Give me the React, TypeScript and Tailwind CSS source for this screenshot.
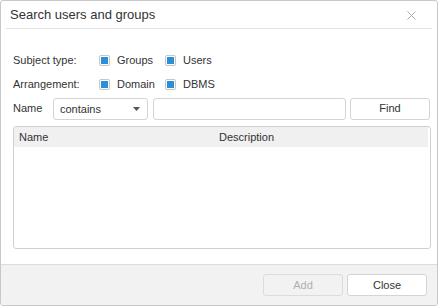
import React from "react";

function Check({ label }: { label: string }) {
  return (
    <div className="flex items-center">
      <div className="w-[11px] h-[11px] border border-[#c6c6c6] rounded-[2px] flex items-center justify-center bg-white">
        <div className="w-[7px] h-[7px] bg-[#2c8ed6]" />
      </div>
      <span className="ml-[7px]">{label}</span>
    </div>
  );
}

export default function App() {
  return (
    <div
      className="w-[440px] h-[307px] bg-white text-[11px] text-[#333]"
      style={{ fontFamily: '"Liberation Sans", Arial, sans-serif' }}
    >
      <div className="w-[438px] h-[306px] border border-[#c8c8c8] rounded-[3px] flex flex-col bg-white overflow-hidden">
        <div className="h-[27px] flex items-center justify-between pl-[9px] pr-[21px]">
          <span className="text-[13px] text-[#333]">Search users and groups</span>
          <svg width="9" height="9" viewBox="0 0 9 9" className="mt-[2px]">
            <path d="M0.5 0.5 L8.5 8.5 M8.5 0.5 L0.5 8.5" stroke="#a8a8a8" strokeWidth="1" />
          </svg>
        </div>
        <div className="mx-[5px] border-b border-[#e2e2e2]" />
        <div className="flex-1 flex flex-col pl-[12px] pr-[6px]">
          <div className="h-[24px] mt-[19px] flex items-center">
            <span className="w-[86px]">Subject type:</span>
            <div className="w-[66px]"><Check label="Groups" /></div>
            <Check label="Users" />
          </div>
          <div className="h-[24px] flex items-center">
            <span className="w-[86px]">Arrangement:</span>
            <div className="w-[66px]"><Check label="Domain" /></div>
            <Check label="DBMS" />
          </div>
          <div className="h-[23px] mt-[1px] flex items-center">
            <span className="w-[40px]">Name</span>
            <div className="w-[95px] h-[22px] border border-[#d4d4d4] rounded-[3px] flex items-center justify-between pl-[6px] pr-[7px]">
              <span className="mt-[1px]">contains</span>
              <svg width="7" height="4" viewBox="0 0 7 4">
                <path d="M0 0 L7 0 L3.5 4 Z" fill="#555" />
              </svg>
            </div>
            <div className="ml-[5px] w-[193px] h-[22px] border border-[#d4d4d4] rounded-[3px]" />
            <div className="ml-[4px] w-[80px] h-[22px] border border-[#d4d4d4] rounded-[3px] flex items-center justify-center">
              Find
            </div>
          </div>
          <div className="mt-[6px] w-[418px] h-[123px] border border-[#d0d0d0] rounded-[3px] overflow-hidden">
            <div className="h-[20px] flex items-center bg-[#f0f0f0] mr-[2px]">
              <span className="w-[205px] pl-[5px]">Name</span>
              <span>Description</span>
            </div>
          </div>
        </div>
        <div className="h-[41px] border-t border-[#dcdcdc] bg-[#f2f2f2] flex items-center justify-end pr-[10px] gap-[4px]">
          <div className="w-[80px] h-[22px] border border-[#dcdcdc] rounded-[3px] flex items-center justify-center text-[#b0b0b0] bg-[#f2f2f2]">
            Add
          </div>
          <div className="w-[80px] h-[22px] border border-[#d4d4d4] rounded-[3px] flex items-center justify-center bg-white">
            Close
          </div>
        </div>
      </div>
    </div>
  );
}
